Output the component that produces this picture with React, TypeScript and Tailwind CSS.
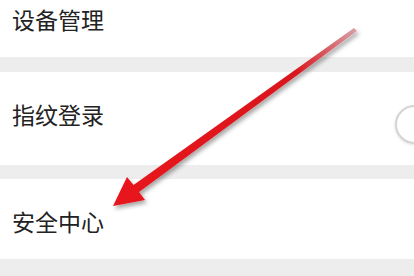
import { FC } from "react"

const font = { fontFamily: '"Noto Sans CJK SC", "Noto Sans", sans-serif' }

const Arrow: FC = () => (
  <svg className="absolute inset-0 pointer-events-none" width="414" height="276" viewBox="0 0 414 276">
    <defs>
      <linearGradient id="shaft" x1="113" y1="206" x2="356" y2="29" gradientUnits="userSpaceOnUse">
        <stop offset="0" stopColor="#e8141b" />
        <stop offset="0.75" stopColor="#d9141c" />
        <stop offset="1" stopColor="#d8a0a6" />
      </linearGradient>
      <filter id="sh" x="-10%" y="-10%" width="130%" height="130%">
        <feDropShadow dx="2" dy="3" stdDeviation="2" floodColor="#000" floodOpacity="0.35" />
      </filter>
    </defs>
    <polygon
      points="113,206 127,177 133.5,185 354,28 357,31 139,192 145,200"
      fill="url(#shaft)"
      filter="url(#sh)"
    />
  </svg>
)

const App: FC = () => {
  return (
    <div className="relative w-[414px] h-[276px] overflow-hidden bg-white text-[#222]" style={font}>
      <div className="flex flex-col">
        <div className="h-[57px] bg-white px-[12px] pt-[7px] text-[23px] leading-[24px]">设备管理</div>
        <div className="h-[15px] bg-[#ededed]" />
        <div className="h-[93px] bg-white pl-[12px] flex justify-between overflow-hidden">
          <span className="pt-[30px] text-[23px] leading-[24px]">指纹登录</span>
          <div className="mt-[33px] mr-[-20px] w-[39px] h-[39px] rounded-full border-2 border-[#d4d4d4] bg-white shadow-[0_1px_3px_rgba(0,0,0,0.12)]" />
        </div>
        <div className="h-[14px] bg-[#ededed]" />
        <div className="h-[80px] bg-white px-[12px] pt-[30px] text-[23px] leading-[24px]">安全中心</div>
        <div className="h-[17px] bg-[#ededed]" />
      </div>
      <Arrow />
    </div>
  )
}

export default App
